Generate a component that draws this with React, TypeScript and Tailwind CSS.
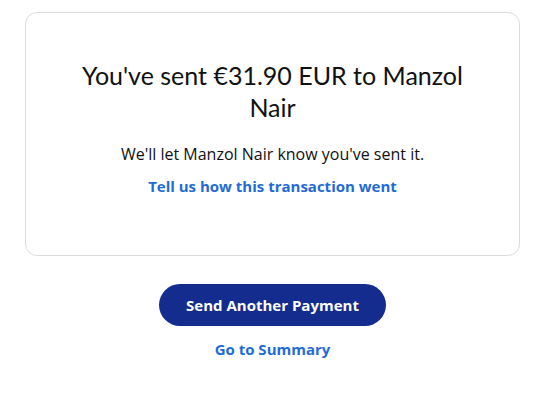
export default function App() {
  return (
    <div className="min-h-screen bg-white px-[25px] pt-[12px] font-['Open_Sans',sans-serif] text-[#001435]">
      <div className="flex w-[495px] flex-col items-center rounded-[12px] border border-[#dcdcdc] px-[40px] pt-[46px] pb-[58px] text-center">
        <h1 className="max-w-[400px] font-['Lato',sans-serif] text-[25px] leading-[32px] font-normal text-[#111]">
          You've sent €31.90 EUR to Manzol Nair
        </h1>
        <p className="mt-[20px] text-[16px] leading-[23px] text-[#111]">
          We'll let Manzol Nair know you've sent it.
        </p>
        <a href="#" className="mt-[9px] text-[15px] leading-[22px] font-bold text-[#1f6bd6]">
          Tell us how this transaction went
        </a>
      </div>
      <div className="flex w-[495px] flex-col items-center">
        <button className="mt-[28px] h-[42px] w-[227px] rounded-full bg-[#142c8e] text-[15px] font-bold text-white">
          Send Another Payment
        </button>
        <a href="#" className="mt-[12px] text-[15px] leading-[22px] font-bold text-[#1f6bd6]">
          Go to Summary
        </a>
      </div>
    </div>
  )
}
